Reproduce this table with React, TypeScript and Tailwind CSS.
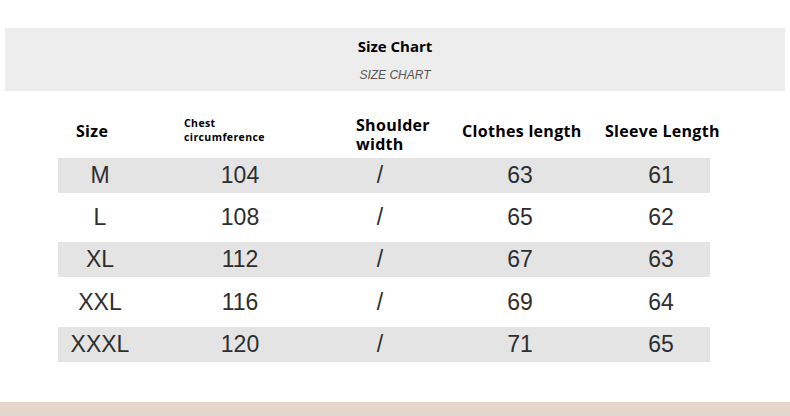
import React from "react";

const rows = [
  { s: "M", c: "104", sh: "/", l: "63", sl: "61", gray: true, h: "h-[35px]" },
  { s: "L", c: "108", sh: "/", l: "65", sl: "62", gray: false, h: "h-[49px]" },
  { s: "XL", c: "112", sh: "/", l: "67", sl: "63", gray: true, h: "h-[35px]" },
  { s: "XXL", c: "116", sh: "/", l: "69", sl: "64", gray: false, h: "h-[50px]" },
  { s: "XXXL", c: "120", sh: "/", l: "71", sl: "65", gray: true, h: "h-[35px]" },
];

export default function App() {
  return (
    <div className="w-[790px] h-[416px] bg-white flex flex-col overflow-hidden">
      <div className="h-[28px]" />
      <div className="mx-[5px] h-[63px] bg-[#ededed] flex flex-col items-center">
        <div
          className="mt-[7px] text-[15px] font-bold text-black leading-[22px]"
          style={{ fontFamily: '"Open Sans", sans-serif' }}
        >
          Size Chart
        </div>
        <div
          className="mt-[11px] text-[12px] italic text-[#555] leading-[14px]"
          style={{ fontFamily: '"Liberation Sans", sans-serif' }}
        >
          SIZE CHART
        </div>
      </div>
      <div
        className="h-[67px] flex items-center pt-[13px] pl-[76px] text-black"
        style={{ fontFamily: '"Open Sans", sans-serif' }}
      >
        <div className="w-[108px] text-[16px] font-bold leading-[19px] tracking-[0.3px]">Size</div>
        <div className="w-[172px] text-[10.5px] font-bold leading-[14px] tracking-[0.4px] -mt-[2px]">
          Chest
          <br />
          circumference
        </div>
        <div className="w-[106px] text-[16px] font-bold leading-[19px] tracking-[0.3px] mt-[8px]">
          Shoulder
          <br />
          width
        </div>
        <div className="w-[143px] text-[16px] font-bold leading-[19px] tracking-[0.3px] whitespace-nowrap">
          Clothes length
        </div>
        <div className="text-[16px] font-bold leading-[19px] tracking-[0.3px] whitespace-nowrap">Sleeve Length</div>
      </div>
      <div
        className="ml-[58px] w-[652px] flex flex-col text-[#2e2e2e]"
        style={{ fontFamily: '"Liberation Sans", sans-serif' }}
      >
        {rows.map((r) => (
          <div
            key={r.s}
            className={`${r.h} grid grid-cols-[84px_196px_84px_196px_92px] items-center text-[23px] leading-none ${
              r.gray ? "bg-[#e4e4e4]" : "bg-white"
            }`}
          >
            <div className="text-center">{r.s}</div>
            <div className="text-center">{r.c}</div>
            <div className="text-center">{r.sh}</div>
            <div className="text-center">{r.l}</div>
            <div className="text-center pr-[6px]">{r.sl}</div>
          </div>
        ))}
      </div>
      <div className="h-[40px]" />
      <div className="flex-1 bg-[#e4d6cb]" />
    </div>
  );
}
